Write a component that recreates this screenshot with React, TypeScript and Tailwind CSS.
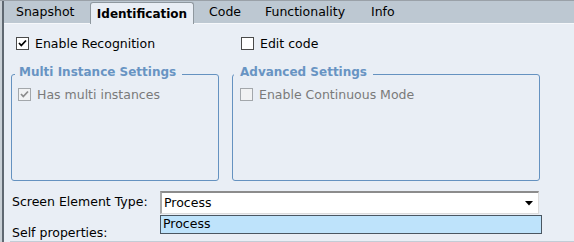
import React from "react";

function Check({ checked, disabled }: { checked?: boolean; disabled?: boolean }) {
  const border = disabled ? "border-[#a3a7ab]" : "border-[#4a4a4a]";
  const bg = disabled ? "bg-[#f1f2f3]" : "bg-white";
  return (
    <span className={`w-[13px] h-[13px] border ${border} ${bg} flex items-center justify-center shrink-0`}>
      {checked && (
        <svg width="11" height="11" viewBox="0 0 11 11">
          <path
            d="M2 5 L4.3 7.5 L9 2.5"
            fill="none"
            stroke={disabled ? "#8c8c8c" : "#000"}
            strokeWidth="1.8"
          />
        </svg>
      )}
    </span>
  );
}

export default function App() {
  return (
    <div className="w-[574px] h-[242px] overflow-hidden border-t border-[#9aa1a8] bg-[#e9eef5] flex font-['DejaVu_Sans',Verdana,sans-serif] text-[12.5px] text-black">
      <div className="w-[2px] bg-[#c9d0d6]" />
      <div className="w-[2px] bg-[#5f6871]" />
      <div className="flex-1 flex flex-col">
        {/* Tabs */}
        <div className="h-[23px] bg-[#bdc8d2] border-b border-[#f6f8fb] flex items-end">
          <div className="w-[86px] h-full pl-[12px] flex items-center">Snapshot</div>
          <div className="w-[104px] h-[22px] -mb-px bg-[#e9eef5] border border-b-0 border-[#8f989f] rounded-t-[3px] flex items-center justify-center font-bold text-[12px]">
            Identification
          </div>
          <div className="w-[58px] h-full pl-[15px] flex items-center">Code</div>
          <div className="w-[93px] h-full pl-[13px] flex items-center">Functionality</div>
          <div className="h-full pl-[26px] flex items-center">Info</div>
        </div>

        {/* Row 1 */}
        <div className="pt-[13px] pl-[12px] flex items-center h-[26px]">
          <div className="w-[225px] flex items-center gap-[6px]">
            <Check checked />
            <span className="leading-[13px]">Enable Recognition</span>
          </div>
          <div className="flex items-center gap-[6px]">
            <Check />
            <span className="leading-[13px]">Edit code</span>
          </div>
        </div>

        {/* Groups */}
        <div className="flex mt-[15px]">
          <fieldset className="ml-[7px] w-[208px] h-[116px] border border-[#6592c0] rounded-[3px] pl-[3px]">
            <legend className="pl-[4px] pr-[6px] pb-[4px] leading-[15px] font-bold text-[12px] text-[#6894c3]">
              Multi Instance Settings
            </legend>
            <div className="mt-[4px] pl-[3px] flex items-center gap-[6px] text-[#7a7a7a]">
              <Check checked disabled />
              <span className="leading-[13px]">Has multi instances</span>
            </div>
          </fieldset>
          <fieldset className="ml-[13px] w-[308px] h-[116px] border border-[#6592c0] rounded-[3px] pl-[1px]">
            <legend className="pl-[6px] pr-[6px] pb-[4px] leading-[15px] font-bold text-[12px] text-[#6894c3]">
              Advanced Settings
            </legend>
            <div className="mt-[4px] pl-[6px] flex items-center gap-[6px] text-[#7a7a7a]">
              <Check disabled />
              <span className="leading-[13px]">Enable Continuous Mode</span>
            </div>
          </fieldset>
        </div>

        {/* Screen element type */}
        <div className="mt-[10px] pl-[8px] flex items-center">
          <span className="w-[148px]">Screen Element Type:</span>
          <div className="relative w-[379px] h-[23px] bg-white border border-t-2 border-l-2 border-t-[#8c8c8c] border-l-[#a9a9a9] border-r-[#dcdcdc] border-b-[#dcdcdc] flex items-center pl-[2px]">
            <span className="flex-1">Process</span>
            <svg width="9" height="5" viewBox="0 0 9 5" className="mr-[4px]">
              <path d="M0 0 H8 L4 4.5 Z" fill="#000" />
            </svg>
            <div className="absolute left-[-2px] top-[22px] w-[382px] h-[19px] bg-[#bee3fb] border border-[#4a5661] flex items-center pl-[2px]">
              Process
            </div>
          </div>
        </div>

        <div className="mt-[11px] pl-[8px] leading-[15px]">Self properties:</div>
        <div className="mt-auto ml-[6px] h-px bg-[#c3ccd6]" />
      </div>
    </div>
  );
}
